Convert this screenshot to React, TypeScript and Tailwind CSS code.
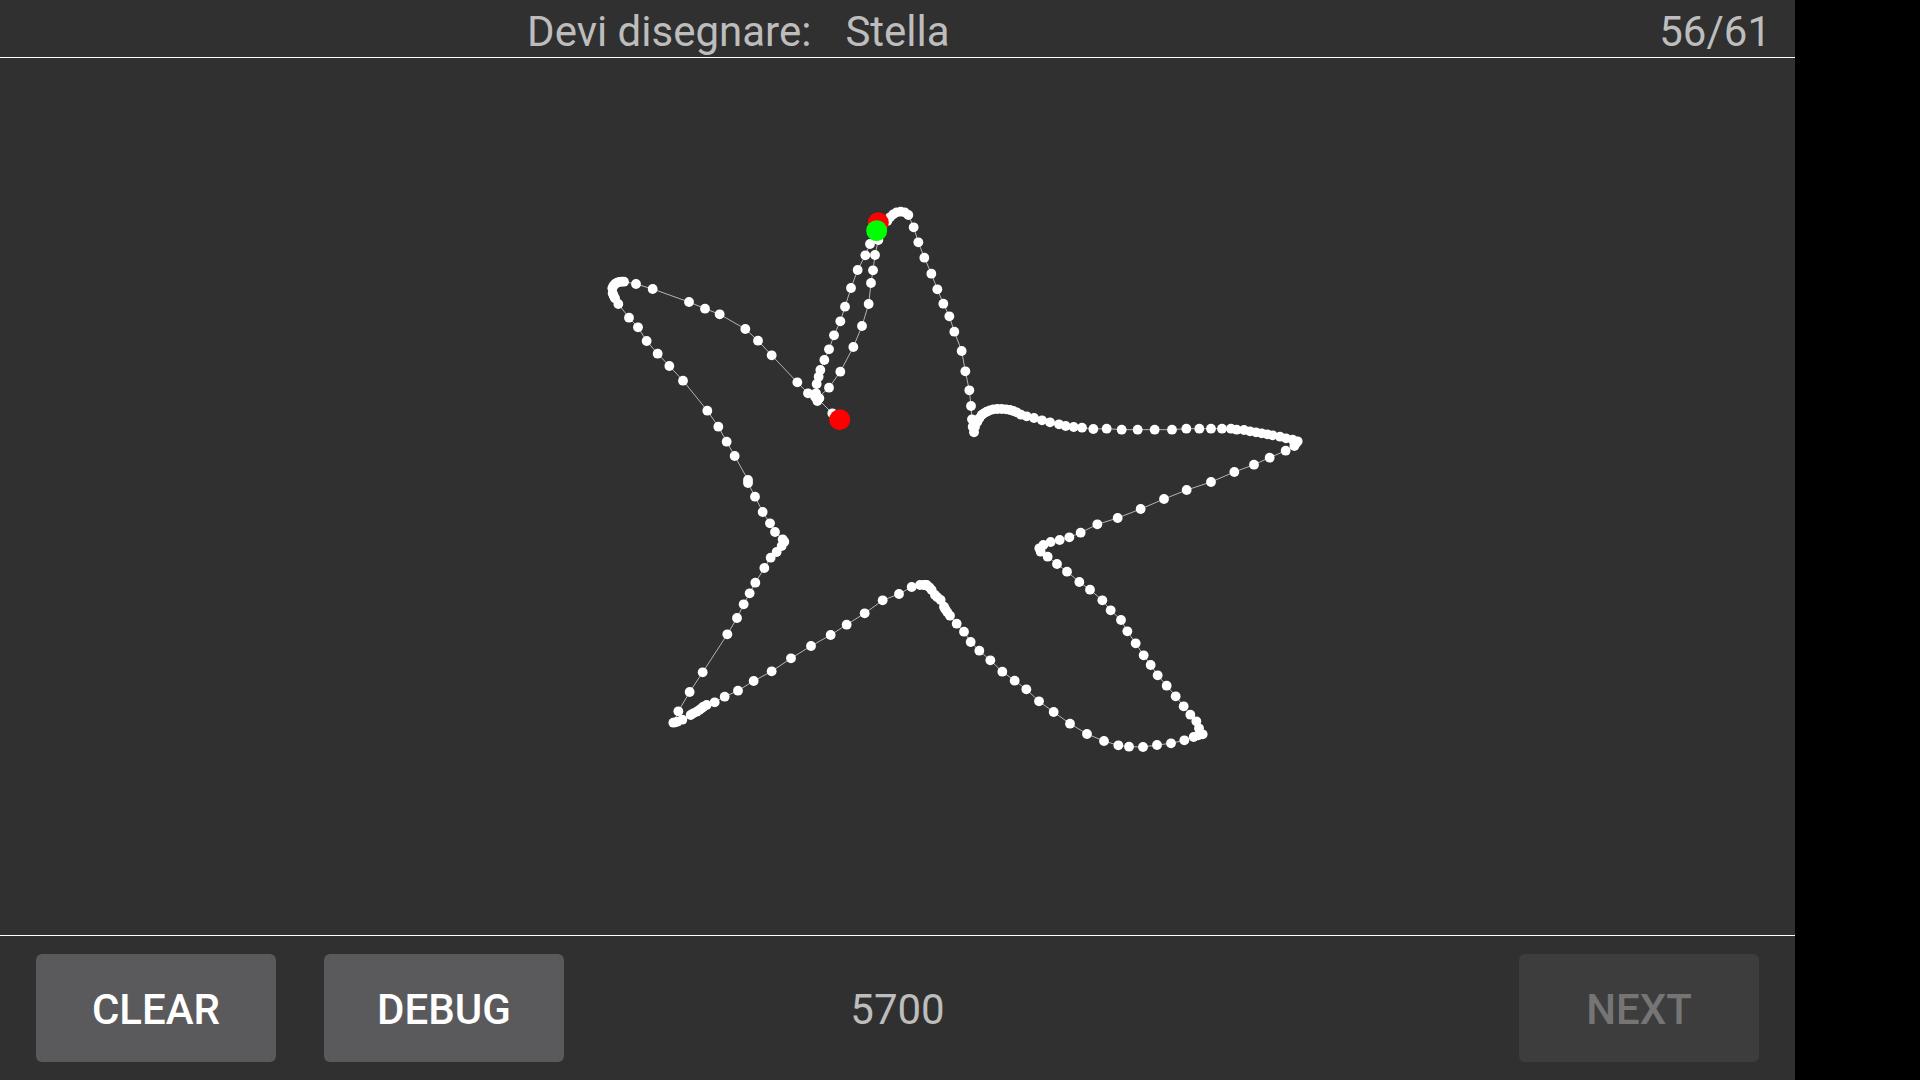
const z1: number[][] = [[895,128],[922,123],[930,112],[940,103],[950,97],[962,95],[974,97],[985,105],[1001,142],[1015,187],[1033,233],[1054,281],[1072,328],[1090,371],[1108,409],[1123,455],[1145,513],[1156,574],[1168,631],[1173,678],[1176,718],[1178,740],[1182,757]];
const z2: number[][] = [[165,740],[172,725],[178,715],[185,705],[192,700],[200,695],[210,691],[220,688],[232,687],[245,687],[258,688],[270,690],[280,693],[290,697],[303,704],[320,709],[342,714],[366,721],[390,727],[417,733],[437,738],[461,741],[486,743],[520,747],[560,746],[605,749],[653,749],[704,749],[756,749],[799,746],[838,746],[873,746],[906,746],[933,746],[950,749],[972,750],[990,754],[1008,757],[1025,760],[1042,763],[1058,766],[1080,770],[1098,775],[1118,779],[1133,784],[1128,790],[1123,798],[1097,812],[1049,833],[1002,854],[943,876]];
const z4: number[][] = [[873,6],[800,30],[732,57],[662,87],[593,114],[532,133],[482,158],[448,172],[419,180],[392,186],[370,195],[358,205],[362,215],[383,230],[411,252],[441,275],[478,306],[510,329],[547,361],[572,391],[603,420],[622,454],[647,490],[671,526],[692,555],[713,586],[740,617],[767,649],[791,679],[811,704],[829,724],[837,745],[848,763],[835,766],[821,771],[793,781],[753,790],[711,795],[669,801],[627,800],[595,796],[552,783],[501,762],[450,731],[401,696],[357,664],[319,628],[284,602],[247,575],[211,541],[178,512],[152,486],[132,455],[110,431],[90,407],[82,397],[76,388],[72,380],[62,360],[52,352],[45,345],[35,330],[28,322],[20,315],[12,315]];
const z3: number[][] = [[855,315],[840,315],[815,321],[777,342],[728,361],[674,400],[620,434],[572,465],[513,498],[453,535],[395,574],[341,603],[294,632],[254,650],[224,667],[200,675],[190,680],[185,685],[178,690],[170,695],[160,700],[152,705],[127,719],[112,725],[106,727],[100,728],[115,694],[149,636],[188,577],[262,463],[291,414],[311,373],[329,340],[346,308],[373,264],[392,233],[410,216],[425,198],[433,185],[428,178],[405,156],[390,130],[368,96],[345,50],[324,9]];
const z1b: number[][] = [[504,900],[464,828],[440,785],[415,740],[382,692],[309,602],[268,558],[233,521],[200,483],[174,442],[147,413],[115,372],[105,355],[101,347],[98,340],[97,325],[100,318],[105,312],[111,308],[118,306],[125,305],[132,305],[168,312],[218,327],[327,366],[375,386],[419,403],[496,447],[534,482],[575,526],[652,607],[684,640],[705,650],[712,663],[718,655],[708,640],[710,612],[716,590],[721,570],[733,540],[747,508],[762,466],[781,424],[795,380],[813,324],[833,270],[856,226],[870,192],[895,180],[885,225],[879,271],[873,309],[866,372],[846,438],[820,501],[781,575],[747,623],[712,655],[757,700]];

const abs = (pts: number[][], ox: number, oy: number) => pts.map(([x, y]) => [ox + x / 3, oy + y / 3]);

const punti = [
  ...abs(z1, 580, 180),
  ...abs(z2, 920, 180),
  ...abs(z4, 920, 480),
  ...abs(z3, 640, 480),
  ...abs(z1b, 580, 180),
];

function Stella() {
  return (
    <svg viewBox="0 58 1795 877" className="h-full w-full">
      <polyline
        points={punti.map((p) => p.join(",")).join(" ")}
        fill="none"
        stroke="#b4b4b4"
        strokeWidth="1"
      />
      {punti.map(([x, y], i) => (
        <circle key={i} cx={x} cy={y} r="4.9" fill="#ffffff" />
      ))}
      <circle cx="878.3" cy="222.7" r="10.5" fill="#ff0000" />
      <circle cx="839.7" cy="419.7" r="10.5" fill="#ff0000" />
      <circle cx="876.7" cy="230.7" r="10.5" fill="#00ff00" />
    </svg>
  );
}

export default function App() {
  return (
    <div className="flex h-screen w-screen bg-black font-['Roboto',sans-serif]">
      <div className="flex h-full w-[1795px] flex-col bg-[#303030]">
        <div className="grid h-[58px] shrink-0 grid-cols-[1fr_auto_1fr] items-center border-b border-white text-[42px] text-[#bdbdbd]">
          <div className="pr-[34px] text-right">Devi disegnare:</div>
          <div>Stella</div>
          <div className="pr-6 text-right">56/61</div>
        </div>

        <div className="min-h-0 flex-1">
          <Stella />
        </div>

        <div className="grid h-[145px] shrink-0 grid-cols-[1fr_auto_1fr] items-center border-t border-white px-9 text-[42px]">
          <div className="flex gap-12">
            <button className="h-[108px] w-60 rounded-md bg-[#5a5a5c] pt-0.5 font-medium text-white">CLEAR</button>
            <button className="h-[108px] w-60 rounded-md bg-[#5a5a5c] pt-0.5 font-medium text-white">DEBUG</button>
          </div>
          <div className="pt-0.5 text-[#bdbdbd]">5700</div>
          <div className="flex justify-end">
            <button className="h-[108px] w-60 rounded-md bg-[#3d3d3d] pt-0.5 font-medium text-[#757575]">NEXT</button>
          </div>
        </div>
      </div>
    </div>
  );
}
